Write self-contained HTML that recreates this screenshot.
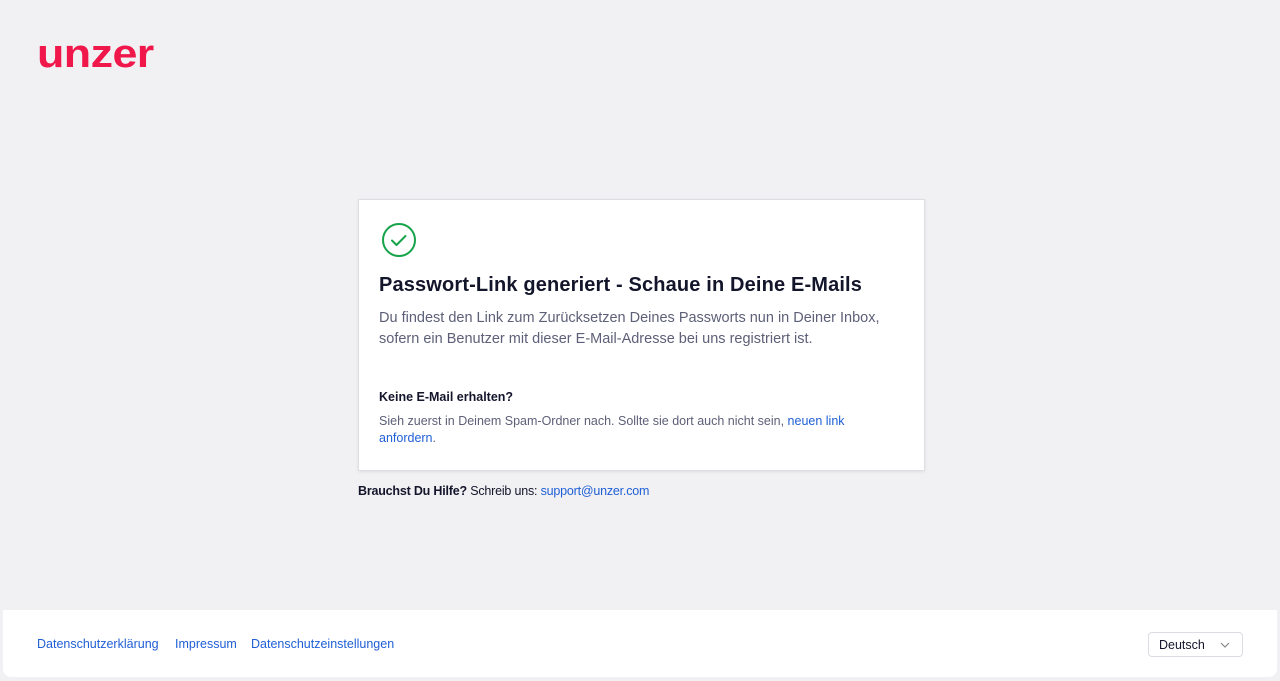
<!DOCTYPE html>
<html><head><meta charset="utf-8"><style>
html,body{margin:0;padding:0;width:1280px;height:681px;overflow:hidden;background:#f1f1f3;font-family:"Liberation Sans",sans-serif;}
.logo{position:absolute;left:37px;top:36px;font-size:40px;font-weight:bold;color:#f0174b;letter-spacing:-0.5px;line-height:36px;transform:scaleX(1.12);transform-origin:left;}
.card{position:absolute;left:358px;top:199px;width:565px;height:270px;background:#fff;border:1px solid #dedee2;box-shadow:0 1px 3px rgba(0,0,0,.08);}
.icon{position:absolute;left:22px;top:22px;}
h1{position:absolute;left:20px;top:74px;margin:0;font-size:20px;font-weight:bold;color:#13152b;white-space:nowrap;letter-spacing:0.15px;}
.p1{position:absolute;left:20px;top:108px;width:530px;font-size:14.5px;line-height:21px;color:#5d6078;}
.h2{position:absolute;left:20px;top:190px;font-size:12.5px;font-weight:bold;color:#13152b;}
.p2{position:absolute;left:20px;top:213px;width:500px;font-size:12.5px;line-height:17px;color:#5d6078;}
a{color:#1f5fd6;text-decoration:none;}
.help{position:absolute;left:358px;top:484px;font-size:12.5px;color:#13152b;letter-spacing:-0.2px;}
.footer{position:absolute;left:3px;top:610px;width:1274px;height:67px;background:#fff;border-radius:0 0 8px 8px;}
.fl{position:absolute;top:27px;font-size:12.5px;}
.sel{position:absolute;left:1145px;top:22px;width:95px;height:25px;border:1px solid #dcdce2;border-radius:4px;font-size:12.5px;color:#13152b;line-height:25px;padding-left:10px;box-sizing:border-box;}
.sel svg{position:absolute;right:12px;top:9px;}
</style></head><body>
<div class="logo">unzer</div>
<div class="card">
<svg class="icon" width="36" height="36" viewBox="0 0 36 36"><circle cx="18" cy="18" r="16" fill="none" stroke="#16a34a" stroke-width="2"/><path d="M11 18.5l4.5 4.5 9-9" fill="none" stroke="#16a34a" stroke-width="2" stroke-linecap="round" stroke-linejoin="round"/></svg>
<h1>Passwort-Link generiert - Schaue in Deine E-Mails</h1>
<div class="p1">Du findest den Link zum Zurücksetzen Deines Passworts nun in Deiner Inbox, sofern ein Benutzer mit dieser E-Mail-Adresse bei uns registriert ist.</div>
<div class="h2">Keine E-Mail erhalten?</div>
<div class="p2">Sieh zuerst in Deinem Spam-Ordner nach. Sollte sie dort auch nicht sein, <a>neuen link anfordern</a>.</div>
</div>
<div class="help"><b>Brauchst Du Hilfe?</b> Schreib uns: <a>support@unzer.com</a></div>
<div class="footer">
<a class="fl" style="left:34px">Datenschutzerklärung</a>
<a class="fl" style="left:172px">Impressum</a>
<a class="fl" style="left:248px">Datenschutzeinstellungen</a>
<div class="sel">Deutsch<svg width="10" height="6" viewBox="0 0 10 6"><path d="M1 1l4 4 4-4" fill="none" stroke="#888" stroke-width="1.2"/></svg></div>
</div>
</body></html>
